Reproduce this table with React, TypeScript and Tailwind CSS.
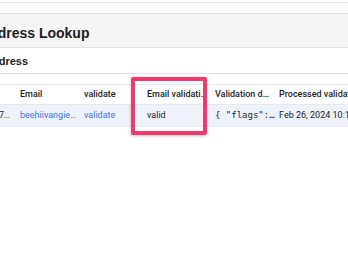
import React from 'react';

const cols = [
    {head: 'ID', cell: '65dc8a27…', kind: 'id', w: 'w-[64px]'},
    {head: 'Email', cell: 'beehiivangie…', kind: 'link', w: 'w-[64px]'},
    {head: 'validate', cell: 'validate', kind: 'link', w: 'w-[63px]'},
    {head: 'Email validati…', cell: 'valid', kind: 'plain', w: 'w-[68px]'},
    {head: 'Validation d…', cell: '{ "flags":…', kind: 'mono', w: 'w-[64px]'},
    {head: 'Processed validation at', cell: 'Feb 26, 2024 10:14 AM', kind: 'plain', w: 'w-[120px]'},
];

const App = () => {
    return (
        <div className="relative w-[348px] h-[268px] overflow-hidden bg-white font-['Liberation_Sans',Arial,sans-serif] text-[#1d1d1f]">
            <div className="h-[3px] border-b border-[#e8e8e8]"/>
            <div className="h-[10px]"/>
            <div className="h-[35px] pt-[5px] bg-[#f5f5f5] border-t border-b border-[#e2e2e2] flex items-center">
                <h1 className="-ml-[21px] text-[14px] font-bold whitespace-nowrap leading-none">Address Lookup</h1>
            </div>
            <div className="h-[26px] pt-[1px] border-b border-[#e2e2e2] flex items-center">
                <h2 className="-ml-[16px] text-[11px] font-bold whitespace-nowrap leading-none">Address</h2>
            </div>
            <div className="h-[10px]"/>
            <div className="-ml-[52px] border-t border-[#e8e8e8] font-['Roboto','Liberation_Sans',sans-serif]">
                <div className="flex h-[20px] items-center border-b border-[#e8e8e8]">
                    {cols.map((c, i) => (
                        <div key={`h-${i}`} className={`${c.w} shrink-0 pl-[8px] whitespace-nowrap text-[9px] font-medium leading-none`}>
                            {c.head}
                        </div>
                    ))}
                </div>
                <div className="flex h-[22px] items-center bg-[#edf2fd] border-b border-[#e3e8f3]">
                    {cols.map((c, i) => (
                        <div
                            key={`c-${i}`}
                            className={`${c.w} shrink-0 pl-[8px] whitespace-nowrap text-[9px] leading-none ${
                                c.kind === 'link' ? 'text-[#3e72e0]' : ''
                            } ${c.kind === 'mono' ? "font-['DejaVu_Sans_Mono',monospace] text-[8px]" : ''} ${
                                c.kind === 'id' ? 'text-right pr-[2px]' : ''
                            }`}
                        >
                            {c.cell}
                        </div>
                    ))}
                </div>
            </div>
            <div className="absolute left-[131px] top-[77px] w-[76px] h-[58px] border-[4px] border-[#f0396c] rounded-[2px] shadow-[0_1px_3px_rgba(0,0,0,0.25)]"/>
        </div>
    );
};

export default App;
